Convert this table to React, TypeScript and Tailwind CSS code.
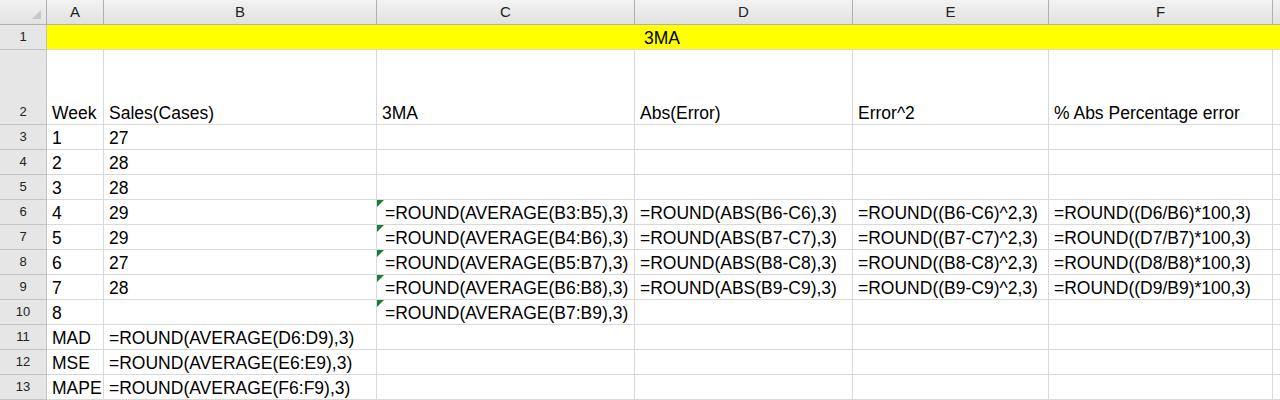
const cols = ["A", "B", "C", "D", "E", "F", ""]

type Row = { n: number; cells: string[] }

const rows: Row[] = [
  { n: 3, cells: ["1", "27", "", "", "", ""] },
  { n: 4, cells: ["2", "28", "", "", "", ""] },
  { n: 5, cells: ["3", "28", "", "", "", ""] },
  {
    n: 6,
    cells: ["4", "29", "=ROUND(AVERAGE(B3:B5),3)", "=ROUND(ABS(B6-C6),3)", "=ROUND((B6-C6)^2,3)", "=ROUND((D6/B6)*100,3)"],
  },
  {
    n: 7,
    cells: ["5", "29", "=ROUND(AVERAGE(B4:B6),3)", "=ROUND(ABS(B7-C7),3)", "=ROUND((B7-C7)^2,3)", "=ROUND((D7/B7)*100,3)"],
  },
  {
    n: 8,
    cells: ["6", "27", "=ROUND(AVERAGE(B5:B7),3)", "=ROUND(ABS(B8-C8),3)", "=ROUND((B8-C8)^2,3)", "=ROUND((D8/B8)*100,3)"],
  },
  {
    n: 9,
    cells: ["7", "28", "=ROUND(AVERAGE(B6:B8),3)", "=ROUND(ABS(B9-C9),3)", "=ROUND((B9-C9)^2,3)", "=ROUND((D9/B9)*100,3)"],
  },
  { n: 10, cells: ["8", "", "=ROUND(AVERAGE(B7:B9),3)", "", "", ""] },
  { n: 11, cells: ["MAD", "=ROUND(AVERAGE(D6:D9),3)", "", "", "", ""] },
  { n: 12, cells: ["MSE", "=ROUND(AVERAGE(E6:E9),3)", "", "", "", ""] },
  { n: 13, cells: ["MAPE", "=ROUND(AVERAGE(F6:F9),3)", "", "", "", ""] },
]

const headers = ["Week", "Sales(Cases)", "3MA", "Abs(Error)", "Error^2", "% Abs Percentage error"]

function RowHead({ n }: { n: number }) {
  return (
    <div className="flex items-end justify-center bg-[#e6e6e6] border-r border-b border-[#c4c4c4] pb-[3px] text-[13px] leading-[18px] text-[#222]">
      {n}
    </div>
  )
}

function Cell({ text, flag }: { text: string; flag?: boolean }) {
  return (
    <div className="relative flex items-end border-r border-b border-[#d9d9d9] bg-white pl-[5px] pb-[1px] text-[17.5px] leading-[20px] text-black whitespace-nowrap">
      {flag && (
        <svg className="absolute left-0 top-0" width="7" height="7" viewBox="0 0 7 7">
          <polygon points="0,0 7,0 0,7" fill="#1a7f35" />
        </svg>
      )}
      <span className={flag ? "pl-[3px]" : ""}>{text}</span>
    </div>
  )
}

export default function App() {
  return (
    <div
      className="w-[1280px] h-[400px] overflow-hidden bg-white"
      style={{ fontFamily: '"Liberation Sans", Arial, sans-serif' }}
    >
      <div className="grid grid-cols-[47px_57px_273px_258px_218px_196px_224px_60px] grid-rows-[25px_25px_75px_repeat(11,25px)]">
        {/* column headers */}
        <div className="relative bg-gradient-to-b from-[#f2f2f2] to-[#e2e2e2] border-r border-b border-[#b0b0b0]">
          <svg className="absolute right-[5px] bottom-[5px]" width="9" height="9" viewBox="0 0 9 9">
            <polygon points="9,0 9,9 0,9" fill="#c8c8c8" />
          </svg>
        </div>
        {cols.map((c, i) => (
          <div
            key={i}
            className="flex items-center justify-center bg-gradient-to-b from-[#f3f3f3] to-[#e1e1e1] border-r border-b border-[#b0b0b0] text-[15px] text-[#222]"
          >
            {c}
          </div>
        ))}

        {/* row 1 */}
        <RowHead n={1} />
        <div className="col-span-7 flex items-end justify-center bg-[#ffff00] border-b border-[#d9d9d9] pb-[1px] pr-[56px] text-[17.5px] leading-[20px] text-black">
          3MA
        </div>

        {/* row 2 */}
        <RowHead n={2} />
        {headers.map((h, i) => (
          <Cell key={i} text={h} />
        ))}
        <Cell text="" />

        {rows.map((r) => (
          <div key={r.n} className="contents">
            <RowHead n={r.n} />
            {r.cells.map((t, i) => (
              <Cell key={i} text={t} flag={i === 2 && t !== ""} />
            ))}
            <Cell text="" />
          </div>
        ))}
      </div>
    </div>
  )
}
